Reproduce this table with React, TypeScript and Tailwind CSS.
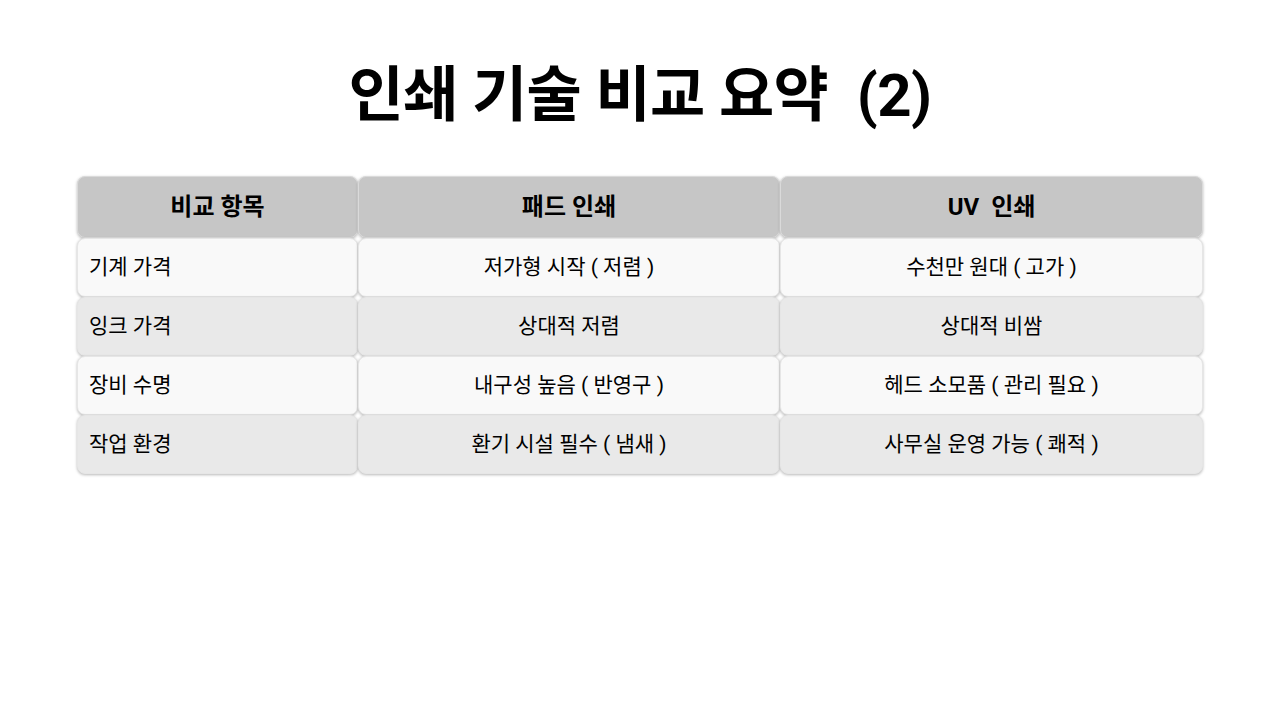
import React from 'react';

const headers = ['비교 항목', '패드 인쇄', 'UV\u00a0 인쇄'];

const rows = [
  ['기계 가격', '저가형 시작 ( 저렴 )', '수천만 원대 ( 고가 )'],
  ['잉크 가격', '상대적 저렴', '상대적 비쌈'],
  ['장비 수명', '내구성 높음 ( 반영구 )', '헤드 소모품 ( 관리 필요 )'],
  ['작업 환경', '환기 시설 필수 ( 냄새 )', '사무실 운영 가능 ( 쾌적 )'],
];

export default function App() {
  return (
    <div
      className="w-[1280px] h-[720px] bg-white flex flex-col items-center"
      style={{ fontFamily: 'Roboto, "Noto Sans CJK KR", sans-serif' }}
    >
      {/* Title */}
      <h1 className="mt-[58px] text-[60px] font-bold leading-[76px] text-black tracking-[-0.6px]">
        인쇄 기술 비교 요약{'\u00a0'} (2)
      </h1>

      {/* Table */}
      <div className="mt-[42px] w-[1126px] grid grid-cols-[281px_422px_423px]">
        {headers.map((h) => (
          <div
            key={h}
            className="h-[62px] flex items-center justify-center rounded-[8px] bg-[#c6c6c6] border border-[#dadada] shadow-[0_1px_3px_rgba(0,0,0,0.28)] text-[24px] font-bold text-black"
          >
            {h}
          </div>
        ))}
        {rows.map((row, ri) => {
          const bg = ri % 2 === 0 ? 'bg-[#f9f9f9]' : 'bg-[#e9e9e9]';
          return row.map((cell, ci) => (
            <div
              key={`${ri}-${ci}`}
              className={`${bg} h-[59px] flex items-center rounded-[8px] border border-[#e6e6e6] shadow-[0_1px_3px_rgba(0,0,0,0.28)] text-[21px] text-black ${
                ci === 0 ? 'justify-start pl-[11px]' : 'justify-center'
              }`}
            >
              {cell}
            </div>
          ));
        })}
      </div>
    </div>
  );
}
